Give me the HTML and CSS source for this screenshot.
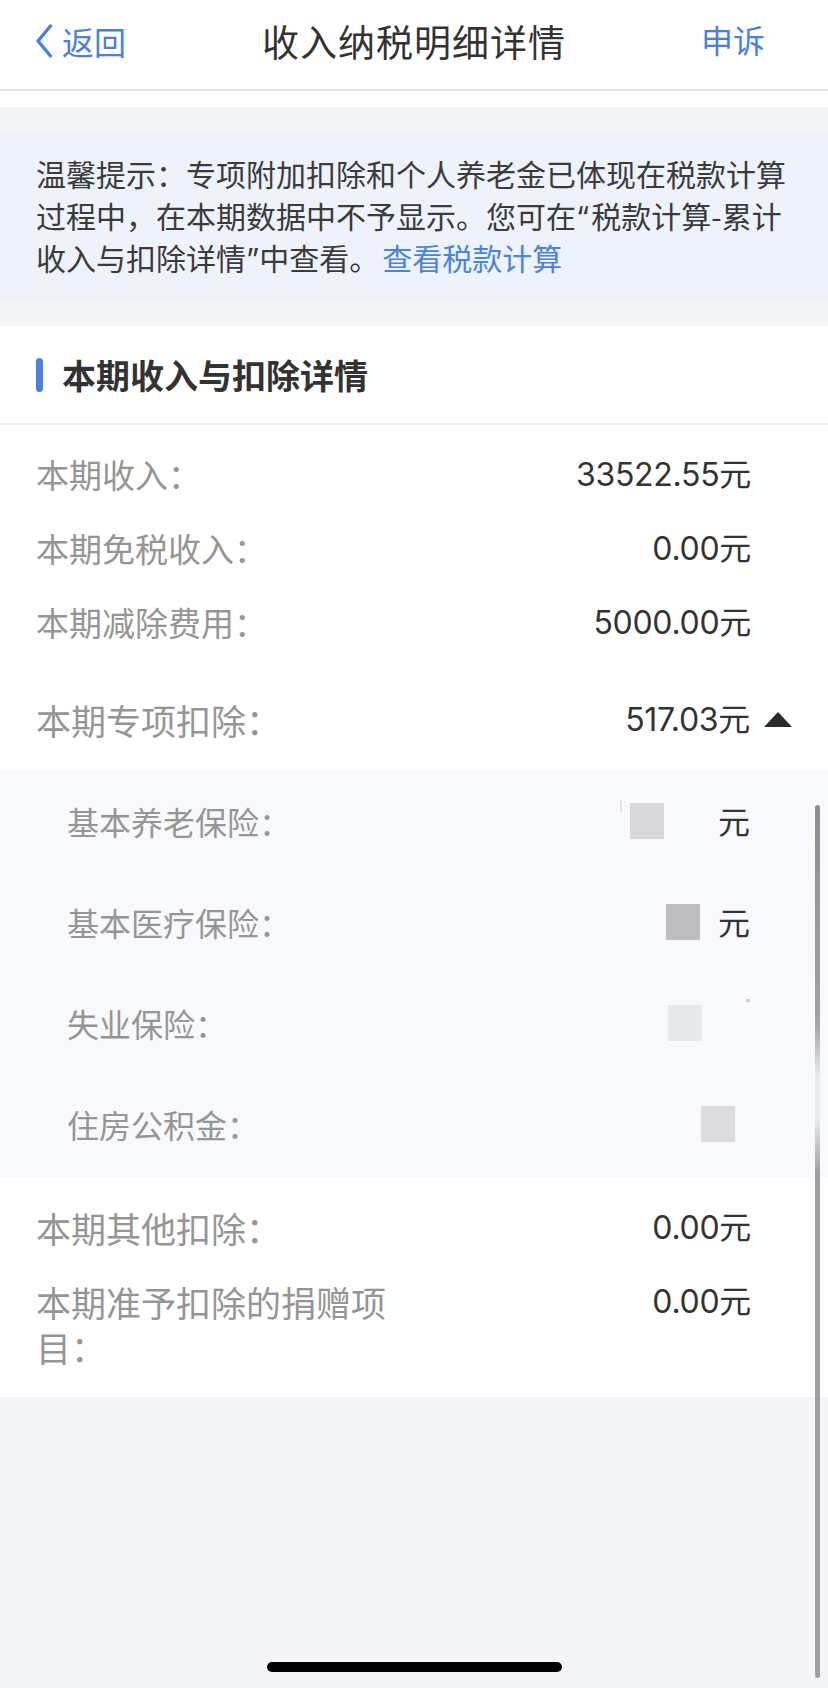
FILE: index.html
```html
<!DOCTYPE html>
<html lang="zh-CN">
<head>
<meta charset="utf-8">
<title>收入纳税明细详情</title>
<link rel="stylesheet" href="styles.css">
</head>
<body>
<div class="app">
  <header class="nav">
    <div class="nav-left">
      <svg class="chev" width="18" height="34" viewBox="0 0 18 34"><polyline points="15.5,2 3,17 15.5,32" fill="none" stroke="#4a80db" stroke-width="3.4" stroke-linecap="round" stroke-linejoin="round"/></svg>
      <span class="nav-link">返回</span>
    </div>
    <div class="nav-title">收入纳税明细详情</div>
    <div class="nav-right"><span class="nav-link">申诉</span></div>
  </header>
  <div class="white-strip"></div>

  <div class="notice">温馨提示：专项附加扣除和个人养老金已体现在税款计算<br>过程中，在本期数据中不予显示。您可在<span class="q q-open">“</span>税款计算-累计<br>收入与扣除详情<span class="q">”</span>中查看。<span class="notice-link">查看税款计算</span></div>

  <section class="card">
    <div class="card-head"><span class="head-bar"></span><span class="head-text">本期收入与扣除详情</span></div>
    <div class="rows">
      <div class="row"><span class="label">本期收入：</span><span class="value">33522.55元</span></div>
      <div class="row"><span class="label">本期免税收入：</span><span class="value">0.00元</span></div>
      <div class="row"><span class="label">本期减除费用：</span><span class="value">5000.00元</span></div>
      <div class="row row-toggle"><span class="label label-lg">本期专项扣除：</span><span class="value">517.03元<span class="tri"></span></span></div>
    </div>
    <div class="sub">
      <div class="sub-row"><span class="label">基本养老保险：</span><span class="sub-val"><span class="tick"></span><span class="blk blk-a"></span><span class="yuan y-gap-a">元</span></span></div>
      <div class="sub-row"><span class="label">基本医疗保险：</span><span class="sub-val"><span class="blk blk-b"></span><span class="yuan y-gap-b">元</span></span></div>
      <div class="sub-row"><span class="label">失业保险：</span><span class="sub-val"><span class="blk blk-c"></span><span class="mark"></span></span></div>
      <div class="sub-row"><span class="label">住房公积金：</span><span class="sub-val"><span class="blk blk-d"></span><span class="pad-d"></span></span></div>
    </div>
    <div class="rows rows-bottom">
      <div class="row"><span class="label label-lg">本期其他扣除：</span><span class="value">0.00元</span></div>
      <div class="row"><span class="label label-lg label-wrap">本期准予扣除的捐赠项目：</span><span class="value">0.00元</span></div>
    </div>
  </section>

  <div class="scroll-ind"></div>
  <div class="home-ind"></div>
</div>
</body>
</html>
```

FILE: styles.css
```css
* { box-sizing: border-box; }
html, body { margin: 0; padding: 0; }
body {
  background: #f4f5f8;
  font-family: Inter, "Noto Sans CJK SC", sans-serif;
  color: #333;
}
.app {
  position: relative;
  width: 828px;
  height: 1688px;
  overflow: hidden;
  background: #f4f5f8;
}

/* nav */
.nav {
  height: 91px;
  background: #fff;
  border-bottom: 2px solid #e6e6e6;
  display: grid;
  grid-template-columns: 1fr auto 1fr;
  align-items: center;
  padding: 0 35px 8px 35px;
  font-family: "Noto Sans CJK SC", sans-serif;
}
.nav-left { display: flex; align-items: center; }
.chev { display: block; margin-right: 9px; }
.nav-link { font-size: 32px; color: #4a80db; line-height: 1; }
.nav-title { font-size: 37px; color: #333; letter-spacing: 1px; }
.nav-right { text-align: right; padding-right: 28px; }
.white-strip { height: 16px; background: #fff; }

/* notice */
.notice {
  margin-top: 27px;
  height: 168px;
  background: #edf2fb;
  padding: 18px 20px 0 36px;
  font-family: "Noto Sans CJK SC", sans-serif;
  font-size: 30px;
  line-height: 42px;
  color: #3b3b3b;
  white-space: nowrap;
}
.q { font-family: Inter, sans-serif; line-height: 1; }
.q-open { letter-spacing: 2px; }
.notice-link { color: #4a84dc; margin-left: 3px; }

/* card */
.card {
  margin-top: 24px;
  background: #fff;
  padding-bottom: 13px;
}
.card-head {
  height: 99px;
  display: flex;
  align-items: center;
  padding-left: 36px;
  border-bottom: 2px solid #ededed;
}
.head-bar {
  width: 7px;
  height: 34px;
  border-radius: 4px;
  background: #4a80ea;
  margin-right: 19px;
}
.head-text {
  font-family: "Noto Sans CJK SC", sans-serif;
  font-size: 34px;
  font-weight: 700;
  color: #333;
}

.rows { padding-top: 13px; }
.rows-bottom { padding-top: 14px; }
.row {
  display: flex;
  justify-content: space-between;
  align-items: flex-start;
  padding: 14px 77px 15px 36px;
  font-size: 32px;
  line-height: 45px;
}
.label {
  font-family: "Noto Sans CJK SC", sans-serif;
  color: #959595;
  font-size: 33px;
}
.sub .label { font-size: 32px; }
.label-lg { font-size: 35px; }
.label-wrap { max-width: 365px; white-space: normal; }
.value { color: #333; letter-spacing: -0.3px; }
.row-toggle {
  margin-top: 10px;
  padding-top: 27px;
  padding-bottom: 28px;
  padding-right: 36px;
}
.row-toggle .value { display: flex; align-items: center; }
.tri {
  width: 0;
  height: 0;
  margin-left: 14px;
  border-left: 14px solid transparent;
  border-right: 14px solid transparent;
  border-bottom: 15px solid #2b2b2b;
}

/* sub */
.sub {
  background: #f7f9fc;
  padding: 0 0 3px;
}
.sub-row {
  height: 101px;
  display: flex;
  justify-content: space-between;
  align-items: center;
  padding: 0 78px 0 67px;
}
.sub-val { display: flex; align-items: center; }
.blk { width: 34px; height: 36px; display: block; }
.blk-a { background: #d8d8da; }
.blk-b { background: #bdbdbf; }
.blk-c { background: #e7e8eb; }
.blk-d { background: #dcdcde; }
.tick { width: 2px; height: 12px; background: #e3e3e3; margin-right: 8px; align-self: flex-start; margin-top: 2px; }
.yuan { font-family: "Noto Sans CJK SC", sans-serif; font-size: 32px; color: #333; line-height: 45px; }
.y-gap-a { margin-left: 54px; }
.y-gap-b { margin-left: 18px; }
.mark { width: 4px; height: 3px; background: #d0d0d0; margin-left: 44px; align-self: flex-start; margin-top: -6px; }
.pad-d { width: 15px; }

/* overlays */
.scroll-ind {
  position: absolute;
  left: 815px;
  top: 805px;
  width: 5px;
  height: 873px;
  border-radius: 3px;
  background: linear-gradient(to bottom, #8e8e92 0%, #a3a3a7 25%, rgba(200,200,204,0.3) 31%, rgba(200,200,204,0.3) 36%, #a0a0a4 42%, #a0a0a4 100%);
}
.home-ind {
  position: absolute;
  left: 267px;
  top: 1662px;
  width: 295px;
  height: 10px;
  border-radius: 5px;
  background: #000;
}
```
